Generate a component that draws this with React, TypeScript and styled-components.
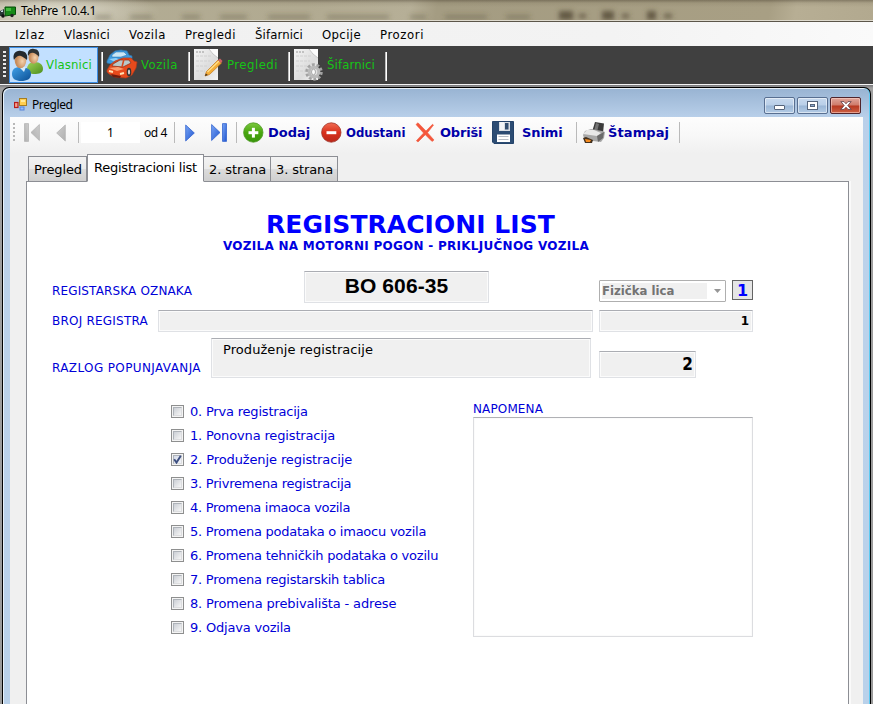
import React from "react";
import styled, { createGlobalStyle } from "styled-components";

const verdana = '"DejaVu Sans", Verdana, sans-serif';
const tahoma = '"DejaVu Sans Condensed", "DejaVu Sans", Tahoma, sans-serif';
const segoe = '"Noto Sans", "Segoe UI", sans-serif';

const GlobalStyle = createGlobalStyle`
  * { box-sizing: border-box; }
  body { margin: 0; background: #989898; font-family: ${verdana}; }
`;

const Desktop = styled.div`
  width: 873px;
  height: 704px;
  overflow: hidden;
  display: flex;
  flex-direction: column;
  color: #000;
`;

const Label = styled.span<{ $ls?: number }>`
  white-space: pre;
  letter-spacing: ${(p) => p.$ls ?? 0}px;
`;

const AppTitleBar = styled.header`
  position: relative;
  display: flex;
  align-items: center;
  flex: 0 0 22px;
  height: 22px;
  overflow: hidden;
  font: 12px/20px ${segoe};
  border-bottom: 1px solid #5c564a;
  box-shadow: inset 0 -1px #dedace;
  background:
    radial-gradient(ellipse 110px 24px at 50px 12px, rgba(235, 233, 222, 0.8), rgba(235, 233, 222, 0) 100%),
    linear-gradient(180deg, rgba(60, 50, 35, 0.4) 0, rgba(90, 80, 60, 0.12) 3px, rgba(0, 0, 0, 0) 7px),
    linear-gradient(100deg, #b3ad95 0, #b1aa91 35%, #b6af97 47%, #a49c82 50%, #a89f84 88%, #b7ae94 91%, #b2a98f 100%);
`;

const Smudges = styled.svg`
  position: absolute;
  left: 0;
  top: 0;
`;

const AppTitle = styled.div`
  position: relative;
  padding-left: 5px;
`;

const TruckIcon = styled.svg`
  position: relative;
  flex: none;
  margin-top: 2px;
`;

const MenuBar = styled.nav`
  display: grid;
  grid-template-columns: 49px 65px 56px 70px 67px 58px 60px;
  align-items: center;
  flex: 0 0 24px;
  padding: 1px 0 0 15px;
  font: 13px/22px ${tahoma};
  background: linear-gradient(90deg, #f0f0f0, #f3f3f3 70%, #fafafa);
`;

const MainToolbar = styled.div`
  display: flex;
  align-items: center;
  flex: 0 0 38px;
  padding-left: 3px;
  background: #404040;
  color: #16c316;
  font: 13px/36px ${tahoma};
`;

const Grip = styled.div<{ $dark?: boolean }>`
  width: ${(p) => (p.$dark ? 3 : 2)}px;
  height: ${(p) => (p.$dark ? 28 : 20)}px;
  background: repeating-linear-gradient(
    180deg,
    ${(p) => (p.$dark ? "#e8e8e8" : "#b8b8b8")} 0 2px,
    transparent 2px 4px
  );
`;

const MainButton = styled.button<{ $width: number; $active?: boolean; $gap: number; $pad: number }>`
  display: flex;
  align-items: center;
  gap: ${(p) => p.$gap}px;
  width: ${(p) => p.$width}px;
  height: 36px;
  margin: ${(p) => (p.$active ? "0 3px" : "0")};
  padding: 0 0 0 ${(p) => p.$pad}px;
  border: 1px solid ${(p) => (p.$active ? "#3c8ee6" : "transparent")};
  background: ${(p) => (p.$active ? "#c2e0ff" : "transparent")};
  color: inherit;
  font: inherit;
  svg { flex: none; }
`;

const MainSeparator = styled.div`
  width: 2px;
  height: 29px;
  margin-top: 2px;
  border-right: 1px solid #fff;
  background: #bdbdbd;
`;

const MdiArea = styled.div`
  display: flex;
  flex: 1;
  min-height: 0;
  padding: 2px 2px 0 2px;
  border-top: 1px solid #f4f4f4;
  background: linear-gradient(180deg, #77777a 0, #a0a0a0 3px, #9a9a9a 100%);
`;

const ChildWindow = styled.section`
  display: flex;
  flex-direction: column;
  flex: 1;
  border: 1px solid #000;
  border-width: 1px 1px 0 1px;
  border-radius: 7px 7px 0 0;
  padding: 0 6px 0 7px;
  background: linear-gradient(180deg, #98b3d2 0, #b9d0ea 30px, #bcd2ea 110px, #b9d1ea 100%);
  box-shadow: inset -1px 0 #5ecbf2, inset 1px 1px #e7f1fa;
`;

const ChildTitleBar = styled.header`
  display: flex;
  align-items: center;
  flex: 0 0 29px;
  padding: 4px 0 0 4px;
  font: 12px/20px ${segoe};
`;

const ChildTitle = styled.div`
  flex: 1;
  padding-left: 5px;
  margin-top: 1px;
`;

const WindowButtons = styled.div`
  display: flex;
  gap: 2px;
  margin: 1px 3px 0 0;
`;

const WindowButton = styled.button<{ $close?: boolean }>`
  display: flex;
  align-items: center;
  justify-content: center;
  width: 31px;
  height: 17px;
  padding: 0;
  border: 1px solid ${(p) => (p.$close ? "#50242b" : "#586f91")};
  border-radius: 2px;
  box-shadow: inset 0 0 0 1px ${(p) => (p.$close ? "rgba(255,215,205,.55)" : "rgba(255,255,255,.5)")};
  background: ${(p) =>
    p.$close
      ? "linear-gradient(180deg, #dfa59a 0, #cf7b6a 48%, #b73820 52%, #cc6044 100%)"
      : "linear-gradient(180deg, #c7d9ee 0, #b9cfe8 48%, #9ab6d6 52%, #b4cce6 100%)"};
`;

const Client = styled.div`
  display: flex;
  flex-direction: column;
  flex: 1;
  min-height: 0;
  width: 853px;
  background: #f0f0f0;
`;

const FormToolbar = styled.div`
  display: grid;
  grid-template-columns: 11px 32px 22px 3px 63px 30px 11px 26px 25px 7px 25px 53px 25px 69px 25px 52px 30px 54px 6px 26px 71px 10px;
  align-items: center;
  flex: 0 0 39px;
  height: 39px;
  padding: 0 0 8px 3px;
  background: linear-gradient(180deg, #fdfdfd 0, #f8f8f8 18px, #f0f0f0 36px);
  svg { display: block; }
`;

const ToolSeparator = styled.div`
  width: 1px;
  height: 21px;
  background: #bababa;
`;

const PositionBox = styled.div`
  width: 59px;
  height: 21px;
  background: #fff;
  text-align: center;
  font: 12px/21px ${segoe};
`;

const PositionCount = styled.div`
  font: 12px/20px ${segoe};
`;

const ToolLabel = styled.div<{ $ls?: number; $narrow?: boolean }>`
  color: #0000a8;
  font: bold 13px/20px ${(p) => (p.$narrow ? tahoma : verdana)};
  letter-spacing: ${(p) => p.$ls ?? 0}px;
  white-space: nowrap;
`;

const Tabs = styled.div`
  display: flex;
  align-items: flex-end;
  flex: 0 0 26px;
  height: 26px;
  margin-bottom: -1px;
  padding-left: 18px;
  z-index: 1;
  font: 13px/24px ${verdana};
`;

const Tab = styled.div<{ $width: number; $active?: boolean; $first?: boolean }>`
  width: ${(p) => p.$width}px;
  height: ${(p) => (p.$active ? 28 : 26)}px;
  flex: none;
  padding: ${(p) => (p.$active ? "1px 0 0 6px" : "1px 0 0 5px")};
  border: 1px solid #8c8e94;
  border-left-width: ${(p) => (p.$active || p.$first ? 1 : 0)}px;
  border-bottom-color: ${(p) => (p.$active ? "#fff" : "#8c8e94")};
  background: ${(p) =>
    p.$active ? "#fff" : "linear-gradient(180deg, #f3f3f3 0, #ebebeb 48%, #dcdcdc 52%, #cfcfcf 100%)"};
`;

const TabPage = styled.main`
  flex: 1;
  width: 823px;
  margin-left: 16px;
  padding: 26px 0 0 25px;
  border: 1px solid #8c8e94;
  border-bottom: 0;
  background: #fff;
  box-shadow: 2px 0 #fafafa;
  color: #0000d8;
`;

const Heading = styled.h1`
  margin: 0 0 0 214px;
  height: 33px;
  color: #00f;
  font: bold 25px/33px ${verdana};
  letter-spacing: 0.05px;
  white-space: nowrap;
`;

const SubHeading = styled.h2`
  margin: -3px 0 0 171px;
  height: 16px;
  color: #0000e0;
  font: bold 12px/16px ${verdana};
  white-space: nowrap;
`;

const FormRow = styled.div<{ $columns: string; $top: number; $height: number }>`
  display: grid;
  grid-template-columns: ${(p) => p.$columns};
  align-items: start;
  height: ${(p) => p.$height}px;
  margin-top: ${(p) => p.$top}px;
`;

const FieldLabel = styled.label<{ $drop?: number; $ls?: number }>`
  padding-top: ${(p) => p.$drop ?? 0}px;
  font: 12px/16px ${verdana};
  letter-spacing: ${(p) => p.$ls ?? 0.15}px;
  white-space: nowrap;
`;

const Field = styled.div<{ $width: number; $height: number; $top?: number; $align?: string }>`
  width: ${(p) => p.$width}px;
  height: ${(p) => p.$height}px;
  margin-top: ${(p) => p.$top ?? 0}px;
  padding: 0 3px;
  text-align: ${(p) => p.$align ?? "left"};
  border: 1px solid #dfe1e5;
  border-top-color: #abadb3;
  box-shadow: inset 0 0 0 1px #fbfbfb;
  background: #f0f0f0;
  color: #000;
`;

const PlateField = styled(Field)`
  text-align: center;
  font: bold 21px/28px "Liberation Sans", Arial, sans-serif;
  letter-spacing: 0.1px;
`;

const RegisterNumber = styled(Field)`
  font: bold 12px/21px ${verdana};
`;

const ReasonField = styled(Field)`
  padding-left: 11px;
  font: 13px/22px ${verdana};
`;

const ReasonCode = styled(Field)`
  padding-right: 2px;
  font: bold 17px/24px ${tahoma};
`;

const OwnerSelect = styled.div`
  display: flex;
  align-items: center;
  justify-content: space-between;
  width: 127px;
  height: 22px;
  margin-top: 9px;
  padding: 0 4px 0 2px;
  border: 1px solid #afafaf;
  border-radius: 1px;
  background: #fff;
  color: #737373;
  font: bold 13px/16px ${tahoma};
`;

const SelectValue = styled.div`
  width: 105px;
  height: 16px;
  background: #f0f0f0;
`;

const OwnerCode = styled.div`
  width: 21px;
  height: 20px;
  margin-top: 9px;
  border: 1px solid #646464;
  background: #e5e5e5;
  color: #00f;
  text-align: center;
  font: bold 16px/19px ${verdana};
`;

const LowerArea = styled.div`
  display: grid;
  grid-template-columns: 302px 280px;
  margin: 20px 0 0 119px;
`;

const CheckList = styled.div`
  display: grid;
  grid-auto-rows: 24px;
`;

const CheckRow = styled.label`
  display: flex;
  align-items: center;
  gap: 6px;
  height: 24px;
`;

const CheckText = styled.span<{ $ls: number }>`
  padding-top: 2px;
  font: 13px/22px ${verdana};
  letter-spacing: ${(p) => p.$ls}px;
  white-space: nowrap;
`;

const CheckBox = styled.span`
  display: flex;
  align-items: center;
  justify-content: center;
  width: 13px;
  height: 13px;
  border: 1px solid #8e8f8f;
  background: #f4f4f4;
`;

const CheckWell = styled.span<{ $checked?: boolean }>`
  display: flex;
  align-items: center;
  justify-content: center;
  width: 9px;
  height: 9px;
  border: 1px solid #aeb3b9;
  border-right-color: #dcdddf;
  border-bottom-color: #dcdddf;
  background: ${(p) =>
    p.$checked ? "linear-gradient(135deg, #d5dbe8, #f1f3f8)" : "linear-gradient(135deg, #cbcfd5, #f6f6f6)"};
  svg { flex: none; }
`;

const NoteColumn = styled.div`
  display: flex;
  flex-direction: column;
`;

const NoteBox = styled(Field)`
  background: #fff;
  border-color: #b0b1b5 #dcdde0 #dcdde0 #dcdde0;
`;

const UsersIcon = () => (
  <svg width="32" height="34" viewBox="0 0 32 34">
    <defs>
      <radialGradient id="face" cx=".65" cy=".55"><stop offset="0" stopColor="#f4d3ae" /><stop offset="1" stopColor="#c98d5c" /></radialGradient>
      <linearGradient id="blueShirt" x2="1" y2="1"><stop offset="0" stopColor="#3fa0e8" /><stop offset="1" stopColor="#0c4f94" /></linearGradient>
      <linearGradient id="greenShirt" x2="1" y2="1"><stop offset="0" stopColor="#9fd257" /><stop offset="1" stopColor="#4c8f1c" /></linearGradient>
    </defs>
    <path d="M15 20c1-4 3-6 8-6 5 0 8 3 8 7 0 4-4 5-9 5-3 0-6-1-7-6z" fill="url(#greenShirt)" />
    <ellipse cx="21.500" cy="9" rx="5" ry="6.700" fill="url(#face)" />
    <path d="M16 8c-1-5 2-8 6-7 4 0 6 3 5 8-1-2-3-3-5-4-3-1-4 0-6 3z" fill="#2d3234" />
    <path d="M0 26c0-6 4-7 9-7s10 2 10 7c0 5-4 7-10 7-5 0-9-2-9-7z" fill="url(#blueShirt)" />
    <path d="M7 19h7l-2 5z" fill="#d9edfa" />
    <ellipse cx="8.500" cy="12.500" rx="5.800" ry="7.700" fill="url(#face)" />
    <path d="M2 12C0 6 4 2 9 3c5 0 7 4 6 9-2-2-4-3-6-4-3-1-5 1-7 4z" fill="#24292d" />
  </svg>
);

const CarsIcon = () => (
  <svg width="32" height="32" viewBox="0 0 32 32">
    <path d="M1 12L4 6l5-4 6-1 6 1 2 4 3 1 0 4-4 3-10 0-6 1-5-1z" fill="#3c9ade" stroke="#2f75ae" strokeWidth=".7" />
    <path d="M6 6l4-3 8 0 3 3-6 2-9 0z" fill="#c9e7f5" stroke="#2b71a8" strokeWidth=".5" />
    <path d="M3 10l7-1 5 2-6 2z" fill="#8ed0f8" />
    <path d="M1 21l3-5 5-4 8-3 8 0 3 3 3 1-1 6-4 7-6 3-11-1-6-3-2-2z" fill="#e64a1c" stroke="#b13a17" strokeWidth=".7" />
    <path d="M7 15l7-4 9 0 2 3-8 4-11-1z" fill="#b9c9c9" stroke="#8d2a12" strokeWidth=".7" />
    <path d="M18 10l-2 8" stroke="#d6491f" strokeWidth="1.500" />
    <path d="M3 19l9-1 6 2-7 2z" fill="#fb9c6e" />
    <ellipse cx="23" cy="23" rx="2.300" ry="4.300" fill="#353433" /><ellipse cx="23" cy="23" rx="1.100" ry="2.500" fill="#d4d4d4" />
    <path d="M5 25l10 2-1 2-7-1z" fill="#6e1c0d" />
    <path d="M3 22l4 1M14 25l4-1" stroke="#ffe2b5" strokeWidth="2" />
  </svg>
);

const Page = () => (
  <>
    <linearGradient id="paper" x2="1" y2="1"><stop offset="0" stopColor="#f5f5f5" /><stop offset=".6" stopColor="#dcdcdc" /><stop offset="1" stopColor="#f5f5f5" /></linearGradient>
    <path d="M0 0h24v31H0z" fill="url(#paper)" />
    <path d="M2 7h16M2 12h14M2 17h12M2 22h9" stroke="#d0d0d0" strokeDasharray="3 1" />
    <path d="M2 3h8" stroke="#999" strokeDasharray="2 1" />
    <path d="M15 0l4 5 5 4V0z" fill="#fbfbfb" />
    <path d="M15 0l4 5 5 4" stroke="#c6c6c6" fill="none" />
  </>
);

const EditPageIcon = () => (
  <svg width="29" height="32" viewBox="0 0 29 32">
    <Page />
    <path d="M11 27l1.500-4.500L24 11l3.500 3L15.500 25.500z" fill="#f4ad37" stroke="#c6791a" strokeWidth=".7" />
    <path d="M13.500 23L25 12" stroke="#ffe08b" strokeWidth="1.200" />
    <path d="M24 11l2-1.500 2.500 2.500-1.500 2z" fill="#cf6266" /><path d="M11 27l.8-2.500 2 1.600z" fill="#3d3022" />
  </svg>
);

const GearPageIcon = () => (
  <svg width="29" height="32" viewBox="0 0 29 32">
    <Page />
    <circle cx="20" cy="23" r="7" fill="none" stroke="#a2a2a2" strokeWidth="3.500" strokeDasharray="2.700 1.700" />
    <circle cx="20" cy="23" r="4.800" fill="#e2e2e2" stroke="#bababa" strokeWidth="3" />
    <ellipse cx="19.500" cy="23" rx="2" ry="2.800" fill="#fafafa" stroke="#8d8d8d" strokeWidth=".7" />
  </svg>
);

const FormIcon = () => (
  <svg width="13" height="13" viewBox="0 0 13 13">
    <rect x="5.5" y=".5" width="7" height="7" fill="#ffce4f" stroke="#a67d20" /><path d="M7 2h4v2H7z" fill="#ffe99a" />
    <rect x=".5" y="4.5" width="3.5" height="5" fill="#f7a18c" stroke="#b51d1b" strokeWidth="1.2" />
    <rect x="6" y="9" width="4" height="3" fill="#8fbdff" stroke="#5883d8" />
  </svg>
);

const ArrowFills = () => (
  <defs>
    <linearGradient id="arrowOn" x2="1" y2="1"><stop offset="0" stopColor="#7aa6f5" /><stop offset="1" stopColor="#1f55d0" /></linearGradient>
    <linearGradient id="arrowOff" x2="1" y2="1"><stop offset="0" stopColor="#cdcdcd" /><stop offset="1" stopColor="#b0b0b0" /></linearGradient>
  </defs>
);

const ArrowIcon = ({ off }: { off?: boolean }) => (
  <svg width="10" height="18" viewBox="0 0 10 18">
    <ArrowFills />
    <path d={off ? "M9.3 1v16L.7 9z" : "M.7 1v16l8.6-8z"} fill={off ? "url(#arrowOff)" : "url(#arrowOn)"} stroke={off ? "#b4b4b4" : "#3465cf"} strokeWidth=".8" />
  </svg>
);

const EndIcon = ({ off }: { off?: boolean }) => (
  <svg width="16" height="19" viewBox="0 0 16 19">
    <g transform={off ? "translate(16 0) scale(-1 1)" : undefined} fill={off ? "url(#arrowOff)" : "url(#arrowOn)"} stroke={off ? "#b4b4b4" : "#3465cf"} strokeWidth=".8">
      <path d="M.6 1.5v16L9 9.5z" /><path d="M11.5 .6h4v17.8h-4z" />
    </g>
  </svg>
);

const RoundIcon = ({ remove }: { remove?: boolean }) => (
  <svg width="21" height="21" viewBox="0 0 21 21">
    <defs>
      <linearGradient id={remove ? "roundRed" : "roundGreen"} x2="0" y2="1">
        <stop offset="0" stopColor={remove ? "#f06c53" : "#7cc83f"} />
        <stop offset=".5" stopColor={remove ? "#d9301c" : "#49a60f"} />
        <stop offset="1" stopColor={remove ? "#b9281a" : "#3a950c"} />
      </linearGradient>
    </defs>
    <circle cx="10.3" cy="10.5" r="9.7" fill={`url(#${remove ? "roundRed" : "roundGreen"})`} stroke={remove ? "#a03227" : "#4c9a22"} strokeWidth=".8" />
    <path d="M5.5 10.7h9.8" stroke="#fff" strokeWidth="3" />
    {!remove && <path d="M10.4 5.8v9.8" stroke="#fff" strokeWidth="3" />}
  </svg>
);

const DeleteIcon = () => (
  <svg width="20" height="21" viewBox="0 0 20 21">
    <path d="M1 2.5l2-1.7L11 9l6.5-6.7 1 .8L12.5 10.7 19 18l-2 1.4-6.7-6.7L3 20 1.4 18.7 8.6 11z" fill="#f5573c" stroke="#ee5a40" strokeWidth=".6" />
  </svg>
);

const FloppyIcon = () => (
  <svg width="22" height="23" viewBox="0 0 22 23">
    <path d="M.5.5h21v22H2l-1.500-1.500z" fill="#2c4c73" stroke="#24436a" />
    <path d="M7 1h11v9H7z" fill="#d8dde3" /><path d="M13 2h3.500v6.500H13z" fill="#344f70" /><path d="M8 1h4v8H8z" fill="#f3f5f7" />
    <path d="M5 13.500h13V21H5z" fill="#fff" /><path d="M6.500 15.500h10M6.500 18.500h10" stroke="#b5bcc5" />
  </svg>
);

const PrinterIcon = () => (
  <svg width="24" height="22" viewBox="0 0 24 22">
    <path d="M10 10L13 0l9 1.500L21 11z" fill="#3b3b3b" /><path d="M14 1l3 1-2 8-3-1z" fill="#747474" />
    <path d="M1 13l2-4 6-2 11 2 3 1-1 6-3 4-8-1-9-3z" fill="#a8a8a8" />
    <path d="M1 12l4-4 7 0 7 3-4 3z" fill="#e8e8e8" />
    <path d="M15 14l7-4-1 6-5 4z" fill="#6a6a6a" />
    <path d="M1 16l3-1 7 3-1 3H3z" fill="#42301e" /><path d="M3 17l6 1-1 2H4z" fill="#f58b1f" />
  </svg>
);

const menuItems: [string, number][] = [
  ["Izlaz", 0.77], ["Vlasnici", 0.14], ["Vozila", 0.51], ["Pregledi", 0.49], ["Šifarnici", 0.12], ["Opcije", 0.37], ["Prozori", 0.59],
];

const reasons: [string, number][] = [
  ["0. Prva registracija", -0.2], ["1. Ponovna registracija", -0.15], ["2. Produženje registracije", -0.11],
  ["3. Privremena registracija", -0.23], ["4. Promena imaoca vozila", -0.3], ["5. Promena podataka o imaocu vozila", -0.24],
  ["6. Promena tehničkih podataka o vozilu", -0.23], ["7. Promena registarskih tablica", -0.23],
  ["8. Promena prebivališta - adrese", -0.15], ["9. Odjava vozila", -0.2],
];

export default function App() {
  return (
    <Desktop>
      <GlobalStyle />
      <AppTitleBar>
        <Smudges width="873" height="20" viewBox="0 0 873 20">
          <defs><filter id="soft" x="-20%" y="-200%" width="140%" height="500%"><feGaussianBlur stdDeviation="2.4" /></filter></defs>
          <g filter="url(#soft)" fill="#514935">
            <path d="M95 15h16v4H95zM130 15h22v4h-22zM182 15h18v4h-18zM220 15h27v4h-27zM268 15h42v4h-42zM327 15h62v4h-62zM410 15h16v4h-16zM445 15h42v4h-42zM506 15h24v4h-24z" opacity=".36" />
            <path d="M559 11h14v9h-14zM579 14h7v4h-7zM602 11h12v9h-12zM622 14h7v4h-7zM647 11h9v9h-9zM664 14h8v4h-8z" opacity=".8" />
          </g>
        </Smudges>
        <TruckIcon width="16" height="12" viewBox="0 0 16 12">
          <path d="M5 1h10.500v7.500L5 10z" fill="#168a17" stroke="#064e08" /><path d="M6 2h5v3H6z" fill="#43ba3e" />
          <path d="M0 5l4-2v7H0z" fill="#283834" /><path d="M1 5l2-1v2H1z" fill="#cadfe5" />
          <circle cx="3" cy="10" r="1.8" fill="#111" /><circle cx="12" cy="9.500" r="1.700" fill="#222" />
        </TruckIcon>
        <AppTitle><Label $ls={-0.28}>TehPre 1.0.4.1</Label></AppTitle>
      </AppTitleBar>
      <MenuBar>{menuItems.map(([text, ls]) => <Label key={text} $ls={ls}>{text}</Label>)}</MenuBar>
      <MainToolbar>
        <Grip $dark />
        <MainButton $width={89} $gap={2} $pad={2} $active><UsersIcon /><Label $ls={0.14}>Vlasnici</Label></MainButton>
        <MainSeparator />
        <MainButton $width={85} $gap={3} $pad={2}><CarsIcon /><Label $ls={0.51}>Vozila</Label></MainButton>
        <MainSeparator />
        <MainButton $width={98} $gap={4} $pad={3}><EditPageIcon /><Label $ls={0.49}>Pregledi</Label></MainButton>
        <MainSeparator />
        <MainButton $width={95} $gap={4} $pad={3}><GearPageIcon /><Label $ls={0.12}>Šifarnici</Label></MainButton>
        <MainSeparator />
      </MainToolbar>
      <MdiArea>
        <ChildWindow>
          <ChildTitleBar>
            <FormIcon />
            <ChildTitle><Label $ls={-0.4}>Pregled</Label></ChildTitle>
            <WindowButtons>
              <WindowButton aria-label="Minimize">
                <svg width="11" height="9" viewBox="0 0 11 9"><rect x=".5" y="4.500" width="10" height="4" rx=".5" fill="#fff" stroke="#55647b" /></svg>
              </WindowButton>
              <WindowButton aria-label="Restore">
                <svg width="11" height="9" viewBox="0 0 11 9"><rect x=".5" y=".5" width="10" height="8" fill="#fff" stroke="#55647b" /><rect x="3.500" y="3.500" width="4" height="2" fill="#8ca8cc" stroke="#55647b" /></svg>
              </WindowButton>
              <WindowButton $close aria-label="Close">
                <svg width="12" height="9" viewBox="0 0 12 9"><path d="M.8.6h3.200L6 2.800 8 .6h3.200L7.800 4.500l3.400 3.900H8L6 6.200 4 8.400H.8l3.400-3.900z" fill="#fff" stroke="#603a44" strokeWidth=".8" /></svg>
              </WindowButton>
            </WindowButtons>
          </ChildTitleBar>
          <Client>
            <FormToolbar>
              <Grip />
              <EndIcon off />
              <ArrowIcon off />
              <ToolSeparator />
              <PositionBox>1</PositionBox>
              <PositionCount><Label $ls={-0.4}>od 4</Label></PositionCount>
              <ToolSeparator />
              <ArrowIcon />
              <EndIcon />
              <ToolSeparator />
              <RoundIcon />
              <ToolLabel>Dodaj</ToolLabel>
              <RoundIcon remove />
              <ToolLabel $narrow>Odustani</ToolLabel>
              <DeleteIcon />
              <ToolLabel $ls={-0.2}>Obriši</ToolLabel>
              <FloppyIcon />
              <ToolLabel $ls={-0.1}>Snimi</ToolLabel>
              <ToolSeparator />
              <PrinterIcon />
              <ToolLabel $ls={0.1}>Štampaj</ToolLabel>
              <ToolSeparator />
            </FormToolbar>
            <Tabs>
              <Tab $width={59} $first><Label $ls={-0.11}>Pregled</Label></Tab>
              <Tab $width={117} $active><Label $ls={-0.24}>Registracioni list</Label></Tab>
              <Tab $width={67}><Label $ls={-0.1}>2. strana</Label></Tab>
              <Tab $width={67}><Label $ls={-0.1}>3. strana</Label></Tab>
            </Tabs>
            <TabPage>
              <Heading>REGISTRACIONI LIST</Heading>
              <SubHeading><Label $ls={0.27}>VOZILA NA MOTORNI POGON - PRIKLJUČNOG VOZILA</Label></SubHeading>
              <FormRow $columns="252px 295px 133px 21px" $top={17} $height={32}>
                <FieldLabel $drop={12}>REGISTARSKA OZNAKA</FieldLabel>
                <PlateField $width={185} $height={32}>BO 606-35</PlateField>
                <OwnerSelect>
                  <SelectValue>Fizička lica</SelectValue>
                  <svg width="7" height="4" viewBox="0 0 7 4"><path d="M0 0h7L3.500 4z" fill="#969696" /></svg>
                </OwnerSelect>
                <OwnerCode>1</OwnerCode>
              </FormRow>
              <FormRow $columns="106px 441px 154px" $top={7} $height={22}>
                <FieldLabel $drop={3} $ls={0.22}>BROJ REGISTRA</FieldLabel>
                <Field $width={435} $height={22} />
                <RegisterNumber $width={154} $height={22} $align="right">1</RegisterNumber>
              </FormRow>
              <FormRow $columns="159px 388px 97px" $top={6} $height={41}>
                <FieldLabel $drop={22} $ls={0.38}>RAZLOG POPUNJAVANJA</FieldLabel>
                <ReasonField $width={380} $height={40}><Label $ls={0.07}>Produženje registracije</Label></ReasonField>
                <ReasonCode $width={97} $height={27} $top={13} $align="right">2</ReasonCode>
              </FormRow>
              <LowerArea>
                <CheckList>
                  {reasons.map(([text, ls], i) => (
                    <CheckRow key={text}>
                      <CheckBox>
                        <CheckWell $checked={i === 2}>
                          {i === 2 && <svg width="9" height="9" viewBox="0 0 9 9"><path d="M1.200 4.300l2.300 3.300L7.800.8" fill="none" stroke="#3d4f80" strokeWidth="1.900" /></svg>}
                        </CheckWell>
                      </CheckBox>
                      <CheckText $ls={ls}>{text}</CheckText>
                    </CheckRow>
                  ))}
                </CheckList>
                <NoteColumn>
                  <FieldLabel $ls={0.13} $drop={2}>NAPOMENA</FieldLabel>
                  <NoteBox $width={280} $height={220} />
                </NoteColumn>
              </LowerArea>
            </TabPage>
          </Client>
        </ChildWindow>
      </MdiArea>
    </Desktop>
  );
}
